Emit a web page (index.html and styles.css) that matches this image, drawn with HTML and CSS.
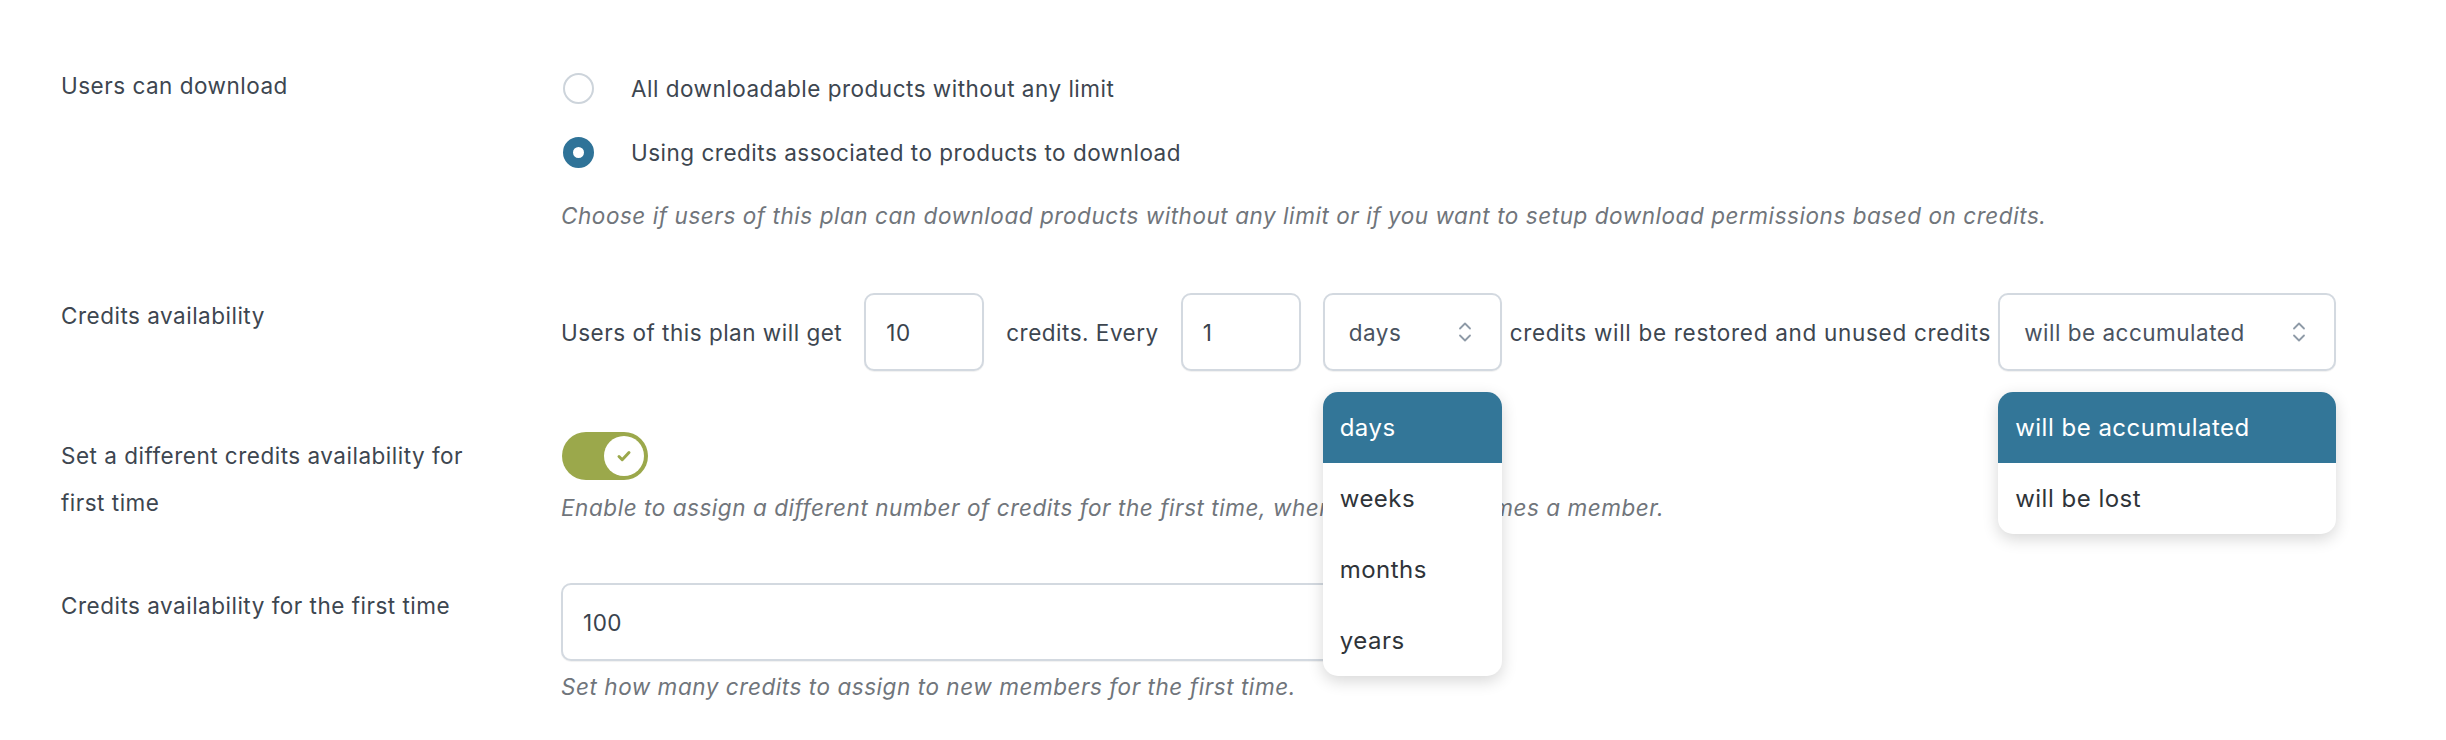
FILE: index.html
```html
<!DOCTYPE html>
<html lang="en">

<head>
    <meta charset="UTF-8">
    <meta name="viewport" content="width=device-width, initial-scale=1.0">
    <link rel="stylesheet" href="styles.css">
    <title>Plan credits</title>
</head>

<body>
    <div class="settings">

        <div class="row row-download">
            <div class="row-label">Users can download</div>
            <div class="row-field">
                <label class="radio"><span class="radio-dot"></span>All downloadable products without any limit</label>
                <label class="radio"><span class="radio-dot checked"></span>Using credits associated to products to download</label>
                <p class="desc">Choose if users of this plan can download products without any limit or if you want to setup download permissions based on credits.</p>
            </div>
        </div>

        <div class="row row-credits">
            <div class="row-label">Credits availability</div>
            <div class="row-field inline">
                <span class="txt">Users of this plan will get</span>
                <input class="num" type="text" value="10">
                <span class="txt">credits. Every</span>
                <input class="num" type="text" value="1">
                <div class="select select-period">
                    <span>days</span>
                    <svg class="chevrons" width="16" height="26" viewBox="0 0 16 26"><path d="M3 9.5 8 4.5l5 5M3 16.5l5 5 5-5" fill="none" stroke="#8e9aa7" stroke-width="1.8" stroke-linecap="round" stroke-linejoin="round"/></svg>
                    <ul class="menu">
                        <li class="active">days</li>
                        <li>weeks</li>
                        <li>months</li>
                        <li>years</li>
                    </ul>
                </div>
                <span class="txt txt-restored">credits will be restored and unused credits</span>
                <div class="select select-unused">
                    <span>will be accumulated</span>
                    <svg class="chevrons" width="16" height="26" viewBox="0 0 16 26"><path d="M3 9.5 8 4.5l5 5M3 16.5l5 5 5-5" fill="none" stroke="#8e9aa7" stroke-width="1.8" stroke-linecap="round" stroke-linejoin="round"/></svg>
                    <ul class="menu">
                        <li class="active">will be accumulated</li>
                        <li>will be lost</li>
                    </ul>
                </div>
            </div>
        </div>

        <div class="row row-toggle">
            <div class="row-label">Set a different credits availability for first time</div>
            <div class="row-field">
                <div class="toggle">
                    <span class="knob">
                        <svg width="18" height="14" viewBox="0 0 18 14"><path d="M4 7.5l3.2 3.2L14 3.5" fill="none" stroke="#9ba84b" stroke-width="3" stroke-linecap="round" stroke-linejoin="round"/></svg>
                    </span>
                </div>
                <p class="desc">Enable to assign a different number of credits for the first time, when the user becomes a member.</p>
            </div>
        </div>

        <div class="row row-first">
            <div class="row-label">Credits availability for the first time</div>
            <div class="row-field">
                <input class="wide" type="text" value="100">
                <p class="desc">Set how many credits to assign to new members for the first time.</p>
            </div>
        </div>

    </div>
</body>

</html>
```

FILE: styles.css
```css
    body {
        margin: 0;
        padding: 0;
        background: #fff;
        color: #3d4650;
        font-family: Inter, 'Noto Sans', sans-serif;
        font-size: 22.5px;
        letter-spacing: 0.5px;
    }

    .settings {
        padding: 56px 0 0 61px;
    }

    .row {
        display: grid;
        grid-template-columns: 410px 1fr;
        column-gap: 90px;
    }

    .row-label {
        line-height: 30px;
        padding-top: 8px;
    }

    .row-download .row-label {
        padding-top: 15px;
    }

    .row-credits {
        margin-top: 62px;
    }

    .row-toggle {
        margin-top: 61px;
    }

    .row-toggle .row-label {
        line-height: 47px;
        padding-top: 0;
    }

    .row-first {
        margin-top: 57px;
    }

    /* radios */
    .radio {
        display: flex;
        align-items: center;
        height: 64px;
    }

    .radio-dot {
        width: 31px;
        height: 31px;
        box-sizing: border-box;
        border: 2px solid #cdd4db;
        border-radius: 50%;
        margin: 0 37px 0 2px;
        background: #fff;
    }

    .radio-dot.checked {
        border: 10.5px solid #2f7398;
    }

    .desc {
        margin: 17px 0 0;
        font-style: italic;
        font-size: 22.5px;
        letter-spacing: 0.55px;
        line-height: 30px;
        color: #70757b;
    }

    /* inline credits row */
    .inline {
        display: flex;
        align-items: center;
        height: 78px;
    }

    .txt {
        white-space: nowrap;
    }

    .txt-restored {
        letter-spacing: 0.7px;
    }

    .num,
    .wide {
        box-sizing: border-box;
        height: 78px;
        border: 2px solid #d3d9e0;
        border-radius: 10px;
        box-shadow: 0 1px 1px rgba(0, 0, 0, 0.06);
        padding: 0 0 0 20px;
        font: inherit;
        letter-spacing: inherit;
        color: #3a434d;
        background: #fff;
        outline: none;
    }

    .num {
        width: 120px;
        margin: 0 22px;
    }

    .wide {
        width: 840px;
        display: block;
    }

    .row-first .desc {
        margin-top: 11px;
    }

    .select {
        position: relative;
        box-sizing: border-box;
        height: 78px;
        display: flex;
        align-items: center;
        justify-content: space-between;
        padding: 0 27px 0 24px;
        border: 2px solid #d3d9e0;
        border-radius: 10px;
        box-shadow: 0 1px 1px rgba(0, 0, 0, 0.06);
        color: #4a5360;
        background: #fff;
    }

    .select-period {
        width: 179px;
        margin-right: 8px;
    }

    .select-unused {
        width: 338px;
        margin-left: 7px;
    }

    .chevrons {
        display: block;
    }

    .menu {
        position: absolute;
        top: calc(100% + 23px);
        left: -2px;
        right: -2px;
        margin: 0;
        padding: 0;
        list-style: none;
        background: #fff;
        border-radius: 15px;
        box-shadow: 0 5px 16px rgba(0, 0, 0, 0.16);
        overflow: hidden;
        z-index: 2;
    }

    .menu li {
        height: 71px;
        line-height: 71px;
        padding-left: 17px;
        font-size: 24px;
        color: #2f3439;
    }

    .menu li.active {
        background: #337698;
        color: #fff;
    }

    /* toggle */
    .toggle {
        width: 86px;
        height: 48px;
        box-sizing: border-box;
        border-radius: 24px;
        background: #9ba84b;
        display: flex;
        align-items: center;
        justify-content: flex-end;
        padding: 0 4px;
        margin-left: 1px;
    }

    .knob {
        width: 40px;
        height: 40px;
        border-radius: 50%;
        background: #fff;
        display: flex;
        align-items: center;
        justify-content: center;
    }

    .row-toggle .desc {
        margin-top: 13px;
    }
```
